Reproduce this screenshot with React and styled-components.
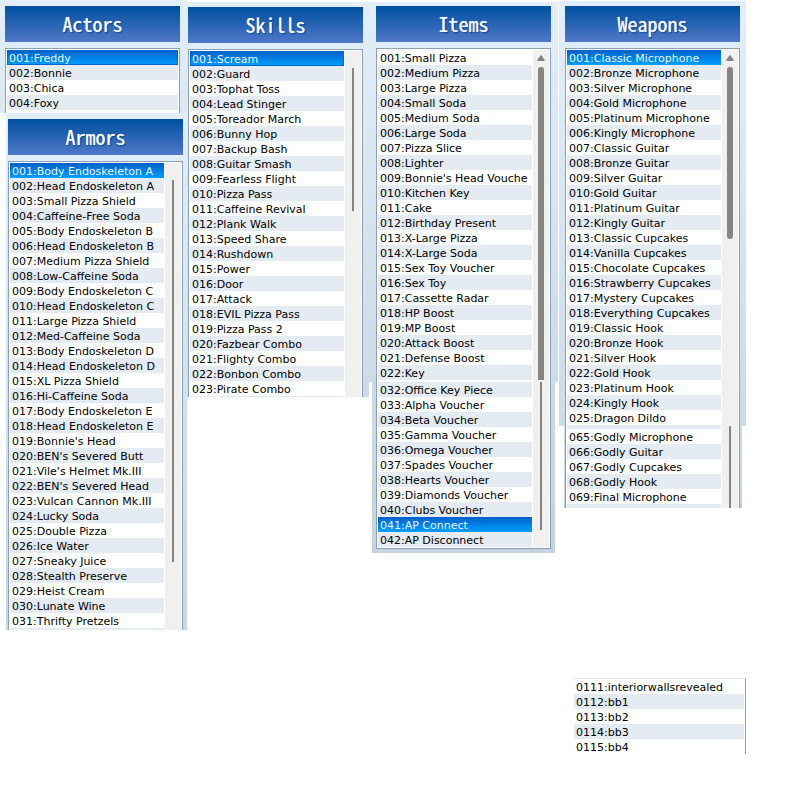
import React from 'react';
import styled, { createGlobalStyle, css } from 'styled-components';

const GlobalStyle = createGlobalStyle`
  *, *::before, *::after { box-sizing: border-box; }
  body { margin: 0; background: #ffffff; }
`;

const Page = styled.main`
  display: grid;
  grid-template-columns: 187fr 182fr 190fr 187fr 54fr;
  align-items: start;
  font-family: Verdana, 'DejaVu Sans', sans-serif;
  font-size: 11px;
  line-height: 15px;
  color: #000000;
`;

const Column = styled.div`
  display: flex;
  flex-direction: column;
  min-width: 0;
  padding-top: ${({ $top }) => $top || 0}px;
`;

const Panel = styled.section`
  background: linear-gradient(${({ $tones }) => $tones || '#e2effb, #c9d7e4'});
  padding: ${({ $pad }) => $pad};
  margin: ${({ $margin }) => $margin || '0'};
`;

const Title = styled.h2`
  margin: 0 0 6px;
  height: 36px;
  line-height: 36px;
  text-align: center;
  font-family: 'Noto Sans Mono CJK JP', 'Liberation Mono', monospace;
  font-size: 20px;
  font-weight: 400;
  color: #f4f8ff;
  text-shadow: 0 0 1px #f4f8ff, 0 0 2px #00408c, 1px 1px 1px #00408c;
  background: linear-gradient(#0050a0, #5078c8);
`;

const Frame = styled.div`
  display: flex;
  background: #ffffff;
  border: 1px solid #8ba0b4;
  border-top-width: ${({ $joined }) => ($joined ? 0 : 1)}px;
  border-bottom-width: ${({ $closed }) => ($closed ? 1 : 0)}px;
  padding: ${({ $joined }) => ($joined ? 0 : 1)}px 1px ${({ $closed }) => ($closed ? 1 : 0)}px;
`;

const Rows = styled.ul`
  flex: 1;
  min-width: 0;
  margin: 0;
  padding: ${({ $lead }) => $lead || 0}px 0 ${({ $tail }) => $tail || 0}px;
  list-style: none;
  background: ${({ $tailStripe }) => ($tailStripe ? '#e4ebf2' : '#ffffff')};
`;

const Row = styled.li`
  height: 15px;
  padding: 1px 0 0 2px;
  overflow: hidden;
  white-space: nowrap;
  background: ${({ $striped }) => ($striped ? '#e4ebf2' : '#ffffff')};
  ${({ $selected }) => $selected && css`
    color: #e8f4ff;
    background: linear-gradient(#0060c8, #00a0ff);
  `}
  ${({ $focused }) => $focused && css`
    box-shadow: inset 0 0 0 1px #0066cc;
  `}
`;

const Track = styled.div`
  display: flex;
  flex-direction: column;
  align-items: center;
  flex: 0 0 16px;
  margin-left: 1px;
  padding-top: ${({ $top }) => $top || 0}px;
  background: #f0f0f0;
`;

const Arrow = styled.svg`
  display: block;
  margin-bottom: 5px;
`;

const Thumb = styled.div`
  width: ${({ $wide }) => ($wide ? 6 : 2)}px;
  height: ${({ $length }) => $length}px;
  border-radius: ${({ $round }) => $round || '0'};
  background: #858585;
`;

const Variables = styled.section`
  display: flex;
  margin: 170px 0 0 15px;
  border-top: 1px solid #e4ebf2;
  border-right: 1px solid #8ba0b4;
  padding-right: 1px;
`;

const number = (start, names, digits = 3) =>
  names.map((name, i) => `${String(start + i).padStart(digits, '0')}:${name}`);

const actors = number(1, ['Freddy', 'Bonnie', 'Chica', 'Foxy']);

const armors = number(1, [
  'Body Endoskeleton A', 'Head Endoskeleton A', 'Small Pizza Shield', 'Caffeine-Free Soda',
  'Body Endoskeleton B', 'Head Endoskeleton B', 'Medium Pizza Shield', 'Low-Caffeine Soda',
  'Body Endoskeleton C', 'Head Endoskeleton C', 'Large Pizza Shield', 'Med-Caffeine Soda',
  'Body Endoskeleton D', 'Head Endoskeleton D', 'XL Pizza Shield', 'Hi-Caffeine Soda',
  'Body Endoskeleton E', 'Head Endoskeleton E', "Bonnie's Head", "BEN's Severed Butt",
  "Vile's Helmet Mk.III", "BEN's Severed Head", 'Vulcan Cannon Mk.III', 'Lucky Soda',
  'Double Pizza', 'Ice Water', 'Sneaky Juice', 'Stealth Preserve', 'Heist Cream',
  'Lunate Wine', 'Thrifty Pretzels',
]);

const skills = number(1, [
  'Scream', 'Guard', 'Tophat Toss', 'Lead Stinger', 'Toreador March', 'Bunny Hop',
  'Backup Bash', 'Guitar Smash', 'Fearless Flight', 'Pizza Pass', 'Caffeine Revival',
  'Plank Walk', 'Speed Share', 'Rushdown', 'Power', 'Door', 'Attack', 'EVIL Pizza Pass',
  'Pizza Pass 2', 'Fazbear Combo', 'Flighty Combo', 'Bonbon Combo', 'Pirate Combo',
]);

const items = number(1, [
  'Small Pizza', 'Medium Pizza', 'Large Pizza', 'Small Soda', 'Medium Soda', 'Large Soda',
  'Pizza Slice', 'Lighter', "Bonnie's Head Vouche", 'Kitchen Key', 'Cake',
  'Birthday Present', 'X-Large Pizza', 'X-Large Soda', 'Sex Toy Voucher', 'Sex Toy',
  'Cassette Radar', 'HP Boost', 'MP Boost', 'Attack Boost', 'Defense Boost', 'Key',
]);

const lateItems = number(32, [
  'Office Key Piece', 'Alpha Voucher', 'Beta Voucher', 'Gamma Voucher', 'Omega Voucher',
  'Spades Voucher', 'Hearts Voucher', 'Diamonds Voucher', 'Clubs Voucher', 'AP Connect',
  'AP Disconnect',
]);

const weapons = number(1, [
  'Classic Microphone', 'Bronze Microphone', 'Silver Microphone', 'Gold Microphone',
  'Platinum Microphone', 'Kingly Microphone', 'Classic Guitar', 'Bronze Guitar',
  'Silver Guitar', 'Gold Guitar', 'Platinum Guitar', 'Kingly Guitar', 'Classic Cupcakes',
  'Vanilla Cupcakes', 'Chocolate Cupcakes', 'Strawberry Cupcakes', 'Mystery Cupcakes',
  'Everything Cupcakes', 'Classic Hook', 'Bronze Hook', 'Silver Hook', 'Gold Hook',
  'Platinum Hook', 'Kingly Hook', 'Dragon Dildo',
]);

const lateWeapons = number(65, [
  'Godly Microphone', 'Godly Guitar', 'Godly Cupcakes', 'Godly Hook', 'Final Microphone',
]);

const variables = number(111, ['interiorwallsrevealed', 'bb1', 'bb2', 'bb3', 'bb4'], 4);

function Entries({ label, entries, selected = -1, focused, stripeFrom = 1, lead, tail, tailStripe }) {
  return (
    <Rows role="listbox" aria-label={label} $lead={lead} $tail={tail} $tailStripe={tailStripe}>
      {entries.map((entry, i) => (
        <Row
          key={entry}
          role="option"
          aria-selected={i === selected}
          $striped={i % 2 === stripeFrom}
          $selected={i === selected}
          $focused={focused && i === selected}
        >
          {entry}
        </Row>
      ))}
    </Rows>
  );
}

function UpArrow() {
  return (
    <Arrow width="8" height="7" viewBox="0 0 8 7" aria-hidden="true">
      <path d="M3.4 0.6Q4 0 4.6 0.6L7.8 5Q8 6 7 6H1Q0 6 0.2 5Z" fill="#858585" />
    </Arrow>
  );
}

export default function App() {
  return (
    <>
      <GlobalStyle />
      <Page>
        <Column>
          <Panel $pad="6px 7px 0 5px" $tones="#e2effb, #dbe8f4">
            <Title>Actors</Title>
            <Frame>
              <Entries label="Actors" entries={actors} selected={0} focused tail={3} />
            </Frame>
          </Panel>
          <Panel $pad="6px 4px 0 2px" $margin="0 0 0 6px">
            <Title>Armors</Title>
            <Frame>
              <Entries label="Armors" entries={armors} selected={0} tail={2} tailStripe />
              <Track $top={17}><Thumb $length={382} /></Track>
            </Frame>
          </Panel>
        </Column>

        <Column $top={2}>
          <Panel $pad="5px 6px 0 1px" $tones="#e2effb, #cddbe8">
            <Title>Skills</Title>
            <Frame>
              <Entries label="Skills" entries={skills} selected={0} focused tail={1} tailStripe />
              <Track $top={17}><Thumb $length={143} /></Track>
            </Frame>
          </Panel>
        </Column>

        <Column $top={2}>
          <Panel $pad="4px 7px 0" $margin="0 1px 0 0" $tones="#e2effb, #cddbe8">
            <Title>Items</Title>
            <Frame>
              <Entries label="Items" entries={items} tail={2} />
              <Track $top={5}>
                <UpArrow />
                <Thumb $wide $length={313} $round="3px 3px 0 0" />
              </Track>
            </Frame>
          </Panel>
          <Panel $pad="0 4px 4px" $margin="0 4px 0 3px" $tones="#cddbe8, #c6d3df">
            <Frame $joined $closed>
              <Entries label="Items, continued" entries={lateItems} selected={9} stripeFrom={0} />
              <Track><Thumb $length={148} /></Track>
            </Frame>
          </Panel>
        </Column>

        <Column $top={1}>
          <Panel $pad="5px 6px 0" $tones="#e2effb, #cddbe8">
            <Title>Weapons</Title>
            <Frame>
              <Entries label="Weapons" entries={weapons} selected={0} tail={1} tailStripe />
              <Track $top={5}>
                <UpArrow />
                <Thumb $wide $length={172} $round="3px" />
              </Track>
            </Frame>
          </Panel>
          <Panel $pad="0 2px 0 1px" $margin="0 4px 0 5px" $tones="#cddbe8, #c6d3df">
            <Frame $joined>
              <Entries label="Weapons, continued" entries={lateWeapons} lead={3} tail={4} tailStripe />
              <Track><Thumb $length={82} /></Track>
            </Frame>
          </Panel>
          <Variables>
            <Entries label="Variables" entries={variables} />
          </Variables>
        </Column>
      </Page>
    </>
  );
}
